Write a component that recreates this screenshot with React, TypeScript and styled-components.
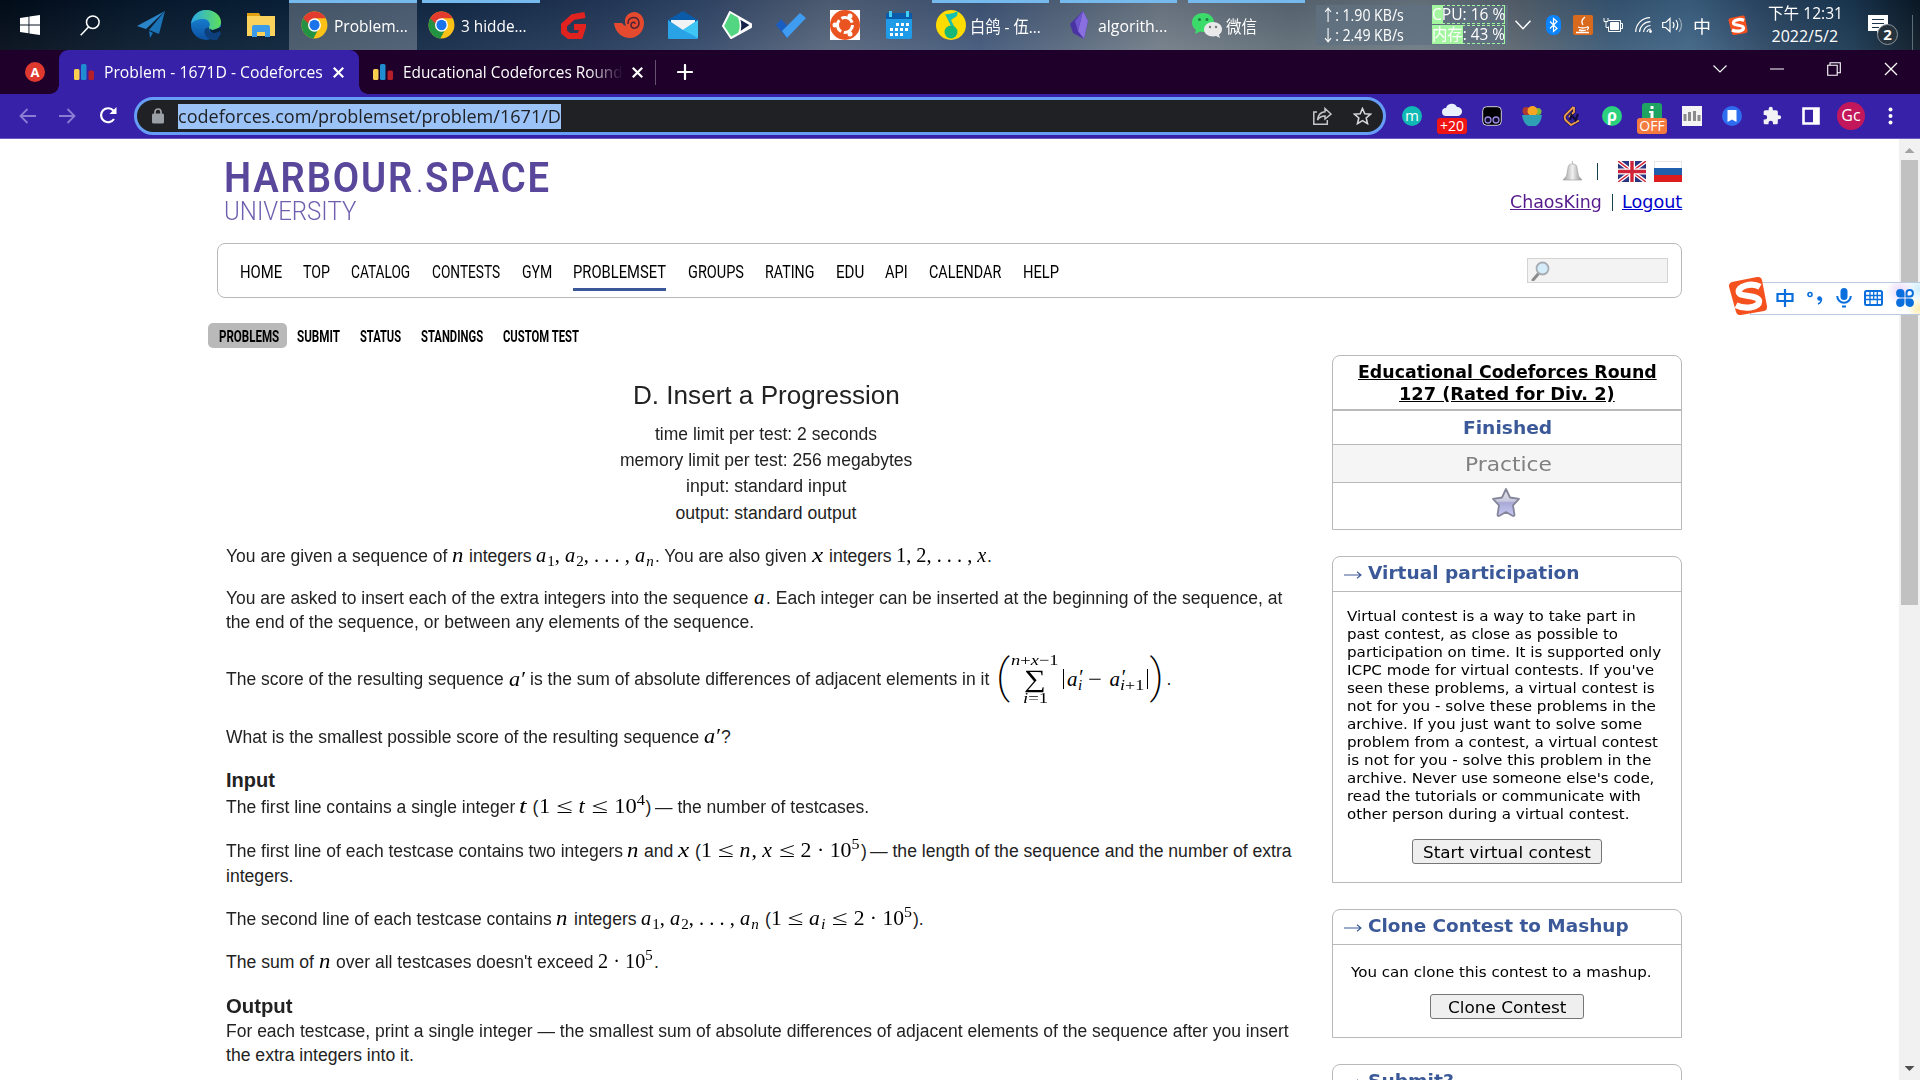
import React, { useLayoutEffect, useRef, useState } from "react";
import styled, { createGlobalStyle, css } from "styled-components";

const ui = `"Open Sans", "Noto Sans", "Noto Sans CJK SC", sans-serif`;
const verdana = `"DejaVu Sans", Verdana, sans-serif`;
const arial = `"Liberation Sans", Arial, sans-serif`;
const serif = `"Liberation Serif", "Times New Roman", serif`;
const blue = "#3b5998";
const line = "#b9b9b9";

const Global = createGlobalStyle`
  * { box-sizing: border-box; }
  html, body { margin: 0; padding: 0; overflow: hidden; background: #fff; }
  svg { display: block; flex: none; }
`;

/* ---------- text set to a given measure ---------- */
const FitBox = styled.span<{ $w: number; $ml?: number }>`
  display: inline-block;
  flex: none;
  width: ${(p) => p.$w}px;
  margin-left: ${(p) => p.$ml ?? 0}px;
  white-space: pre;
`;
const FitInner = styled.span<{ $u?: boolean }>`
  display: inline-block;
  transform-origin: 0 50%;
  text-decoration: ${(p) => (p.$u ? "underline" : "none")};
`;
type FitProps = { w: number; ml?: number; u?: boolean; className?: string; children: React.ReactNode };
function Fit({ w, ml, u, className, children }: FitProps) {
  const ref = useRef<HTMLSpanElement>(null);
  const [scale, setScale] = useState(1);
  useLayoutEffect(() => {
    if (ref.current) setScale(w / ref.current.offsetWidth);
  }, [w]);
  return (
    <FitBox $w={w} $ml={ml} className={className}>
      <FitInner ref={ref} $u={u} style={{ transform: `scaleX(${scale})` }}>
        {children}
      </FitInner>
    </FitBox>
  );
}

/* ---------- shell ---------- */
const Screen = styled.div`
  width: 1920px;
  height: 1080px;
  overflow: hidden;
  display: flex;
  flex-direction: column;
  position: relative;
  font-family: ${ui};
`;

/* ---------- task bar ---------- */
const TaskBar = styled.div`
  height: 50px;
  flex: none;
  display: flex;
  color: #fff;
  font-size: 17px;
  background: linear-gradient(180deg, rgba(0, 10, 30, 0.12), rgba(255, 255, 255, 0.05)),
    linear-gradient(90deg, #020b17 0, #07192c 130px, #0a2138 280px, #142b48 440px, #253a5a 600px, #34496a 700px, #56657b 830px, #42587a 980px, #596a7f 1070px, #727d88 1160px, #5f6c76 1290px, #6e7b84 1420px, #59646f 1520px, #3a5a77 1610px, #3f6485 1690px, #2b4662 1770px, #1b3953 1850px, #0b1824 1920px);
`;
const Launcher = styled.div<{ $w: number; $ml?: number }>`
  flex: none;
  width: ${(p) => p.$w}px;
  margin-left: ${(p) => p.$ml ?? 0}px;
  display: flex;
  align-items: center;
  justify-content: center;
`;
const Task = styled.div<{ $w: number; $ml?: number; $active?: boolean; $pad?: number }>`
  flex: none;
  width: ${(p) => p.$w}px;
  margin-left: ${(p) => p.$ml ?? 0}px;
  padding-left: ${(p) => p.$pad ?? 4}px;
  display: flex;
  align-items: center;
  border-top: 3px solid #76b9ed;
  padding-bottom: 3px;
  background: ${(p) => (p.$active ? "rgba(255,255,255,.24)" : "none")};
`;
const Meter = styled.div`
  flex: none;
  width: 192px;
  height: 40px;
  margin: 5px 0 0 11px;
  padding-left: 5px;
  display: grid;
  grid-template-columns: 111px 73px;
  grid-template-rows: 20px 20px;
  line-height: 20px;
  font-size: 16px;
  background: rgba(96, 114, 130, 0.75);
`;
const Gauge = styled.div<{ $fill: number }>`
  height: 19px;
  line-height: 19px;
  border: 1px dashed #a4f5a0;
  border-left: 0;
  background: linear-gradient(90deg, #a4f5a0 ${(p) => p.$fill}px, transparent ${(p) => p.$fill}px);
  display: flex;
  align-items: center;
`;
const Clock = styled.div`
  flex: none;
  width: 76px;
  margin-left: 20px;
  display: flex;
  flex-direction: column;
  align-items: center;
  font-size: 16px;
  line-height: 23px;
  padding-top: 2px;
`;
const Notice = styled.div`
  position: relative;
  margin: 15px 0 0 25px;
  width: 45px;
  border-right: 1px solid #5d6c79;
`;
const NoticeCount = styled.div`
  position: absolute;
  left: 9px;
  top: 9px;
  width: 21px;
  height: 21px;
  border-radius: 50%;
  border: 1px solid #8d969e;
  background: #26323c;
  font: bold 15px/18px ${ui};
  text-align: center;
`;

/* ---------- browser chrome ---------- */
const TabStrip = styled.div`
  height: 44px;
  flex: none;
  display: flex;
  align-items: center;
  background: #1e002a;
  color: #fff;
  font-size: 16px;
`;
const PinTab = styled.div`
  width: 20px;
  height: 20px;
  margin-left: 25px;
  border-radius: 50%;
  background: #df382f;
  font: bold 13px/20px ${ui};
  text-align: center;
`;
const ActiveTab = styled.div`
  width: 300px;
  height: 44px;
  margin-left: 14px;
  padding-left: 15px;
  display: flex;
  align-items: center;
  border-radius: 9px 9px 0 0;
  background: #3621a8;
  position: relative;
  &::before, &::after {
    content: "";
    position: absolute;
    bottom: 0;
    width: 9px;
    height: 9px;
  }
  &::before { left: -9px; background: radial-gradient(circle at 0 0, transparent 8.5px, #3621a8 9px); }
  &::after { right: -9px; background: radial-gradient(circle at 100% 0, transparent 8.5px, #3621a8 9px); }
`;
const IdleTab = styled.div`
  width: 297px;
  height: 25px;
  padding-left: 14px;
  display: flex;
  align-items: center;
  border-right: 1px solid #65526e;
`;
const FadeTitle = styled.div`
  width: 220px;
  margin-left: 10px;
  overflow: hidden;
  mask-image: linear-gradient(90deg, #000 185px, transparent 220px);
`;
const WindowButtons = styled.div`
  display: flex;
  align-items: center;
  gap: 43px;
  margin-left: auto;
  padding-right: 22px;
  padding-bottom: 6px;
`;
const Toolbar = styled.div`
  height: 45px;
  flex: none;
  display: flex;
  align-items: center;
  padding-bottom: 1px;
  background: #3621a8;
  border-bottom: 1px solid #6b5bc0;
`;
const Omnibox = styled.div`
  width: 1252px;
  height: 38px;
  margin: 1px 0 0 17px;
  padding: 0 12px 0 15px;
  display: flex;
  align-items: center;
  border: 3px solid #669df6;
  border-radius: 19px;
  background: #202124;
`;
const Url = styled.div`
  height: 25px;
  margin-left: 14px;
  background: #9cc3f7;
  color: #202124;
  font-size: 19px;
  line-height: 24px;
`;
const Ext = styled.div<{ $ml?: number; $w?: number }>`
  flex: none;
  width: ${(p) => p.$w ?? 20}px;
  height: 32px;
  margin-left: ${(p) => p.$ml ?? 20}px;
  display: flex;
  align-items: center;
  justify-content: center;
  position: relative;
`;
const Round = styled.div<{ $s: number; $bg: string; $f?: number }>`
  width: ${(p) => p.$s}px;
  height: ${(p) => p.$s}px;
  border-radius: 50%;
  background: ${(p) => p.$bg};
  color: #fff;
  font-size: ${(p) => p.$f ?? 15}px;
  line-height: ${(p) => p.$s - 2}px;
  text-align: center;
`;
const Badge = styled.div<{ $bg: string }>`
  position: absolute;
  left: -5px;
  top: 18px;
  width: 30px;
  height: 16px;
  border-radius: 3px;
  background: ${(p) => p.$bg};
  color: #fff;
  font-size: 14px;
  line-height: 15px;
  text-align: center;
`;

/* ---------- page ---------- */
const Viewport = styled.div`
  height: 941px;
  display: flex;
  justify-content: space-between;
  background: #fff;
`;
const Page = styled.div`
  width: 1465px;
  margin-left: 217px;
`;
const ScrollBar = styled.div`
  width: 21px;
  display: flex;
  flex-direction: column;
  align-items: center;
  background: #f1f1f1;
`;
const Thumb = styled.div`
  width: 17px;
  height: 445px;
  margin-top: 7px;
  background: #c1c1c1;
`;
const Arrow = styled.div<{ $down?: boolean }>`
  width: 10px;
  height: 5px;
  margin-top: ${(p) => (p.$down ? "auto" : "9px")};
  margin-bottom: ${(p) => (p.$down ? "9px" : "0")};
  background: ${(p) => (p.$down ? "#505050" : "#a3a3a3")};
  clip-path: ${(p) => (p.$down ? "polygon(0 0, 100% 0, 50% 100%)" : "polygon(50% 0, 100% 100%, 0 100%)")};
`;
const Header = styled.header`
  height: 104px;
  display: flex;
  justify-content: space-between;
`;
const Logo = styled.div`
  padding: 18px 0 0 7px;
  display: flex;
  flex-direction: column;
  font-family: Roboto, sans-serif;
`;
const LogoName = styled.div`
  height: 42px;
  font-size: 42px;
  line-height: 42px;
  font-weight: 600;
  letter-spacing: 2px;
  color: #59479b;
`;
const LogoDot = styled.span`
  display: inline-block;
  width: 12px;
  font-size: 22px;
  line-height: 22px;
  font-weight: 400;
  text-align: center;
  letter-spacing: 0;
`;
const LogoSub = styled.div`
  height: 24px;
  font-size: 25.5px;
  line-height: 24px;
  font-weight: 300;
  color: #6f5fae;
`;
const User = styled.div`
  display: flex;
  flex-direction: column;
  align-items: flex-end;
  font: 17.6px/24px ${verdana};
  padding-top: 21px;
  color: #0c3c5c;
`;
const UserIcons = styled.div`
  height: 23px;
  display: flex;
  align-items: center;
`;
const UserLinks = styled.div`
  display: flex;
  margin-top: 7px;
  align-items: baseline;
`;
const Link = styled.span<{ $c: string }>`
  color: ${(p) => p.$c};
`;
const Bar = styled.span<{ $l: number; $r: number }>`
  width: 1px;
  height: 17px;
  align-self: center;
  margin: 0 ${(p) => p.$r}px 0 ${(p) => p.$l}px;
  background: #14404e;
`;
const Menu = styled.nav`
  height: 55px;
  padding: 0 13px 0 22px;
  display: flex;
  align-items: center;
  justify-content: space-between;
  border: 1px solid ${line};
  border-radius: 8px;
  font: 18.4px/24px Roboto, sans-serif;
  color: #000;
`;
const MenuItems = styled.div`
  display: flex;
  gap: 21.2px;
  padding-top: 7px;
`;
const MenuItem = styled.span<{ $on?: boolean }>`
  height: 34px;
  border-bottom: 3px solid ${(p) => (p.$on ? blue : "transparent")};
  padding-top: 3px;
`;
const Search = styled.div`
  width: 141px;
  height: 25px;
  margin-bottom: 1px;
  padding: 2px 3px;
  border: 1px solid #d3d3d3;
  background: #f3f3f3;
`;
const SubMenu = styled.div`
  display: flex;
  margin: 25px 0 7px -9px;
  height: 25px;
  font: bold 16px/27px Roboto, sans-serif;
`;
const SubPill = styled.span`
  width: 79px;
  padding-left: 10.5px;
  border-radius: 5px;
  background: #b9b9b9;
`;
const Main = styled.main`
  display: flex;
  justify-content: space-between;
`;
const Statement = styled.article`
  width: 1080px;
  margin-left: 9px;
  font: 17.6px/24px ${arial};
  color: #222;
`;
const Title = styled.h1`
  margin: 23px 0 8.75px;
  font-size: 26.4px;
  line-height: 34px;
  font-weight: 400;
  text-align: center;
`;
const Limits = styled.div`
  display: flex;
  flex-direction: column;
  align-items: center;
  line-height: 26.3px;
  margin-bottom: 18px;
`;
const Line = styled.div<{ $mt?: number; $h?: number }>`
  display: flex;
  align-items: ${(p) => (p.$h ? "center" : "baseline")};
  height: ${(p) => p.$h ?? 24}px;
  margin-top: ${(p) => p.$mt ?? 0}px;
`;
const Section = styled.h2<{ $mt: number }>`
  margin: ${(p) => p.$mt}px 0 0;
  font-size: 20px;
  line-height: 26px;
  font-weight: 700;
`;
const math = css`
  font-family: ${serif};
  font-size: 21px;
  line-height: 1px;
  color: #000;
`;
const M = styled(Fit)`
  ${math}
  i { padding-right: 1px; }
`;
const Sub = styled.span`
  font-size: 15.5px;
  vertical-align: -4px;
`;
const Sup = styled.span`
  font-size: 15.5px;
  vertical-align: 8px;
`;
const Formula = styled.span`
  ${math}
  display: flex;
  align-items: center;
  height: 50px;
  margin-left: 7px;
`;
const Paren = styled(Fit)`
  font-family: Roboto, sans-serif;
  font-weight: 200;
  font-size: 46px;
  line-height: 50px;
  padding-bottom: 6px;
`;
const SumStack = styled.span`
  width: 50px;
  display: flex;
  flex-direction: column;
  align-items: center;
  font-size: 15px;
`;
const SumPart = styled.span<{ $h: number; $f?: number }>`
  height: ${(p) => p.$h}px;
  line-height: ${(p) => p.$h}px;
  font-size: ${(p) => p.$f ?? 15}px;
`;
const Abs = styled.span`
  width: 1px;
  height: 20px;
  background: #000;
`;
const SubSup = styled.span`
  display: inline-flex;
  flex-direction: column;
  font-size: 15px;
  line-height: 13px;
`;
const Prime = styled.span`
  height: 12px;
  font-size: 20px;
  line-height: 20px;
  font-style: italic;
`;

/* ---------- side bar ---------- */
const Side = styled.aside`
  width: 350px;
  display: flex;
  flex-direction: column;
  gap: 26px;
  font: 17.6px/22px ${verdana};
  color: #000;
`;
const Box = styled.section`
  border: 1px solid ${line};
  border-radius: 8px 8px 0 0;
`;
const RoundTitle = styled.div`
  padding: 5px 0 4px;
  display: flex;
  flex-direction: column;
  align-items: center;
  font-weight: 700;
  border-bottom: 2px solid ${line};
`;
const State = styled.div`
  height: 34px;
  line-height: 33px;
  padding: 1px 3px 0 0;
  text-align: center;
  font-weight: 700;
  color: ${blue};
  border-bottom: 1px solid ${line};
`;
const Practice = styled.div`
  height: 38px;
  line-height: 36px;
  padding: 1px 4px 0 0;
  text-align: center;
  font-size: 20px;
  color: #808080;
  background: #f5f5f5;
  border-bottom: 1px solid ${line};
`;
const StarCell = styled.div`
  height: 46px;
  padding: 4px 0 0 158px;
`;
const BoxHead = styled.div`
  height: 35px;
  padding-left: 11px;
  line-height: 32px;
  display: flex;
  font-weight: 700;
  color: ${blue};
  border-bottom: 1px solid ${line};
`;
const Tail = styled.div`
  width: 18px;
  margin-right: 6px;
  padding-top: 14px;
`;
const BoxBody = styled.div<{ $pt: number; $pl: number }>`
  padding: ${(p) => p.$pt}px 0 18px ${(p) => p.$pl}px;
  display: flex;
  flex-direction: column;
  font-size: 14.2px;
  line-height: 18px;
`;
const Button = styled.button<{ $w: number; $mt: number; $ml: number }>`
  width: ${(p) => p.$w}px;
  height: 25px;
  margin: ${(p) => p.$mt}px 0 0 ${(p) => p.$ml}px;
  padding: 0 2px 0 0;
  border: 1px solid #767676;
  border-radius: 3px;
  background: #efefef;
  color: #000;
  font: 16.6px/26px ${verdana};
`;

/* ---------- input-method bar floating over the window ---------- */
const Ime = styled.div`
  position: absolute;
  left: 1728px;
  top: 275px;
  width: 192px;
  height: 41px;
  display: flex;
  align-items: center;
`;
const ImeBar = styled.div`
  width: 170px;
  height: 33px;
  margin: 5px 0 0 -18px;
  padding: 0 6px 0 25px;
  display: flex;
  align-items: center;
  justify-content: space-between;
  border: 1px solid #b9cbe2;
  border-right: 0;
  background: radial-gradient(circle at 149px 8px, #e9d9fb 0, transparent 14px), radial-gradient(circle at 168px 26px, #fdeeb0 0, transparent 12px), radial-gradient(circle at 168px 6px, #cfeefc 0, transparent 14px), #fff;
`;
const ImeS = styled.div`
  position: relative;
`;

/* ---------- icons ---------- */
const Chrome = () => (
  <svg width="27" height="28" viewBox="0 0 48 48" preserveAspectRatio="none">
    <circle cx="24" cy="24" r="23" fill="#fbc116" />
    <path d="M24 24 4.1 12.5A23 23 0 0 0 22 47l10-18Z" fill="#229342" />
    <path d="M24 24 4.1 12.5A23 23 0 0 1 44 12.5H24Z" fill="#e33b2e" />
    <path d="M4.1 12.5 14 29.5 24 13Z" fill="#e33b2e" />
    <path d="M4.1 12.5 14 29.8 18 26Z" fill="#229342" />
    <circle cx="24" cy="24" r="11.5" fill="#fff" />
    <circle cx="24" cy="24" r="9" fill="#1a73e8" />
  </svg>
);
const CfIcon = () => (
  <svg width="20" height="16" viewBox="0 0 20 16">
    <rect x="0" y="5" width="5.5" height="11" rx="1.5" fill="#f8cf4e" />
    <rect x="7" y="0" width="5.5" height="16" rx="1.5" fill="#1f8dd0" />
    <rect x="14.5" y="6.5" width="5.5" height="9.5" rx="1.5" fill="#b41f2a" />
  </svg>
);
const Cross = ({ s = 11, w = 2 }: { s?: number; w?: number }) => (
  <svg width={s} height={s} viewBox="0 0 10 10"><path d="M.7.7l8.6 8.6M9.3.7.7 9.3" stroke="#fff" strokeWidth={w} /></svg>
);
const Sogou = ({ s, h = s }: { s: number; h?: number }) => (
  <svg width={s} height={h} viewBox="0 0 40 40" preserveAspectRatio="none">
    <path d="M5 6 29 1q4-.6 5 3l5 27q.4 4-3 5l-23 4q-4 .6-5-3L1 11q-.5-4 4-5Z" fill="#f4511e" />
    <path d="M32 11C23 6 9 11 11 17c2 5 20 2 20 9 0 7-15 8-23 4" fill="none" stroke="#fff" strokeWidth="6.4" />
  </svg>
);

const sideText: [string, number][] = [
  ["Virtual contest is a way to take part in", 289],
  ["past contest, as close as possible to", 271],
  ["participation on time. It is supported only", 314],
  ["ICPC mode for virtual contests. If you've", 307.5],
  ["seen these problems, a virtual contest is", 307.5],
  ["not for you - solve these problems in the", 309],
  ["archive. If you just want to solve some", 295],
  ["problem from a contest, a virtual contest", 310.5],
  ["is not for you - solve this problem in the", 304.5],
  ["archive. Never use someone else's code,", 307],
  ["read the tutorials or communicate with", 294],
  ["other person during a virtual contest.", 282.5],
];
const menu: [string, number][] = [
  ["HOME", 42], ["TOP", 27], ["CATALOG", 59.5], ["CONTESTS", 68.5], ["GYM", 30.5], ["PROBLEMSET", 93],
  ["GROUPS", 56], ["RATING", 49.5], ["EDU", 28], ["API", 23], ["CALENDAR", 72.5], ["HELP", 36],
];

const Tick = () => (
  <Tail><svg width="18" height="8" viewBox="0 0 18 8"><path d="M0 4h17M13 .8 17 4l-4 3.2" fill="none" stroke={blue} strokeWidth="1.1" /></svg></Tail>
);

function Tasks() {
  return (
    <TaskBar>
      <Launcher $w={20} $ml={20}>
        <svg width="20" height="20" viewBox="0 0 20 20" fill="#fff"><path d="M0 3l8.5-1.3v7.8H0zM9.4 1.5 20 0v9.5H9.4zM0 10.4h8.5v7.8L0 17zM9.4 10.4H20V20L9.4 18.4z" /></svg>
      </Launcher>
      <Launcher $w={20} $ml={40}>
        <svg width="20" height="21" viewBox="0 0 20 21" fill="none" stroke="#fff" strokeWidth="1.5"><circle cx="12.8" cy="7.2" r="6.3" /><path d="M8.5 12 .7 20.3" /></svg>
      </Launcher>
      <Launcher $w={28} $ml={37}>
        <svg width="28" height="28" viewBox="0 0 28 28"><path d="M28 0 0 15l9 3z" fill="#2a86c8" /><path d="M28 0 12 19l10 4z" fill="#1b73b8" /><path d="m12 20 4 2-3 5z" fill="#1b73b8" /></svg>
      </Launcher>
      <Launcher $w={30} $ml={26}>
        <svg width="30" height="30" viewBox="0 0 30 30">
          <defs>
            <linearGradient id="eg1" x1="0" x2="1"><stop stopColor="#2aa7e8" /><stop offset="1" stopColor="#5ee05a" /></linearGradient>
            <linearGradient id="eg2" x1="0" y1="0" x2="0" y2="1"><stop stopColor="#1b8fe0" /><stop offset="1" stopColor="#0c4fa0" /></linearGradient>
          </defs>
          <circle cx="15" cy="15" r="15" fill="url(#eg2)" />
          <path d="M0 14C1 5 8 0 15 0c9 0 15 6 15 12 0 5-4 8-8 8-3 0-5-1-4-3 2-3 0-8-6-8-5 0-10 2-12 5Z" fill="url(#eg1)" />
          <path d="M18 17c-1 3 1 6 5 6 2 0 4-1 6-2l1 3-4 6H22c-6-1-10-6-8-11Z" fill="#0c3f7c" />
          <path d="M18.500 18c0 3 2 5 5 5 2 0 4-1 6.500-2.500V17l-8 3q-2.500 0-3.500-2Z" fill="#08223a" />
        </svg>
      </Launcher>
      <Launcher $w={28} $ml={26}>
        <svg width="28" height="24" viewBox="0 0 28 24"><path d="M0 0h12l2 4H0z" fill="#e0a012" /><path d="M0 3h28v20H0z" fill="#fbd25c" /><path d="M5 24V14q0-2 2-2h14q2 0 2 2v10h-5v-5h-8v5z" fill="#3b9be8" /></svg>
      </Launcher>
      <Task $w={128} $ml={14} $pad={12} $active><Chrome /><Fit w={74} ml={6}>Problem...</Fit></Task>
      <Task $w={118} $ml={5} $pad={6}><Chrome /><Fit w={66} ml={6}>3 hidde...</Fit></Task>
      <Launcher $w={26} $ml={20}>
        <svg width="26" height="28" viewBox="0 0 26 28" fill="none" stroke="#e0231f" strokeWidth="6"><path d="M25 4 13 6 4 14v7l5 4h11l3-9h-9" /></svg>
      </Launcher>
      <Launcher $w={30} $ml={28}>
        <svg width="30" height="26" viewBox="0 0 30 26"><path d="M0 11h8q2 3 4 3C9 6 13 1 20 0c6 0 10 5 10 11 0 8-6 15-14 15C8 26 1 20 0 11Z" fill="#e64a2e" /><path d="M14 12c-1-8 11-9 11-1 0 6-8 7-8 2 0-3 4-4 4-1" fill="none" stroke="#4b2236" strokeWidth="1.500" /></svg>
      </Launcher>
      <Launcher $w={30} $ml={24}>
        <svg width="30" height="28" viewBox="0 0 30 28"><path d="M0 9 15 0l15 9v4H0z" fill="#0a5cab" /><path d="M3 9h24v10H3z" fill="#f1f3f5" /><path d="M0 9v18q0 1 1 1h28q1 0 1-1V9L15 19z" fill="#2aa3e6" /><path d="M15 19 30 9v18z" fill="#3fc6f5" /></svg>
      </Launcher>
      <Launcher $w={30} $ml={24}>
        <svg width="30" height="28" viewBox="0 0 30 28"><path d="M8 1 29 13v3L9 27 1 15z" fill="#52d681" stroke="#fff" strokeWidth="2" strokeLinejoin="round" /><path d="m17 7 12 7-12 8q3-7 0-15Z" fill="#15224a" stroke="#fff" strokeWidth="1.6" /></svg>
      </Launcher>
      <Launcher $w={30} $ml={24}>
        <svg width="30" height="25" viewBox="0 0 30 25"><path d="m0 12 5-6 11 12-5 7z" fill="#1a5dc0" /><path d="M11 25 6 18 24 0l6 5z" fill="#3f9cf0" /></svg>
      </Launcher>
      <Launcher $w={30} $ml={24}>
        <svg width="30" height="30" viewBox="0 0 30 30"><path d="M0 0h30v30H0z" fill="#fff" /><circle cx="15" cy="15" r="15" fill="#e95420" /><circle cx="15" cy="15" r="7.5" fill="none" stroke="#fff" strokeWidth="3" strokeDasharray="13 2.7" /><circle cx="5" cy="15" r="2.5" fill="#fff" /><circle cx="20" cy="6" r="2.5" fill="#fff" /><circle cx="20" cy="24" r="2.5" fill="#fff" /></svg>
      </Launcher>
      <Launcher $w={26} $ml={26}>
        <svg width="26" height="28" viewBox="0 0 26 28"><path d="M0 3h26v23q0 2-2 2H2q-2 0-2-2z" fill="#1f9be8" /><path d="M0 2h26v6H0z" fill="#0a5cab" /><path d="M3 0h3v6H3zM20 0h3v6h-3z" fill="#3fd0f5" /><path d="M10 12h3v3h-3zm5 0h3v3h-3zm5 0h3v3h-3zM4 17h3v3H4zm5 0h3v3H9zm5 0h3v3h-3zm5 0h3v3h-3zM4 22h3v3H4zm5 0h3v3H9zm5 0h3v3h-3z" fill="#fff" /></svg>
      </Launcher>
      <Task $w={117} $ml={20}>
        <svg width="30" height="30" viewBox="0 0 30 30"><circle cx="15" cy="15" r="15" fill="#ffdc00" /><path d="M9 4q6 1 13-3l-1 5-6 4 6 12-4-2-7-14Z" fill="#17bfae" /><circle cx="15" cy="22" r="6.5" fill="#17b877" /></svg>
        <Fit w={71} ml={4}>白鸽 - 伍...</Fit>
      </Task>
      <Task $w={117} $ml={11} $pad={10}>
        <svg width="18" height="28" viewBox="0 0 18 28"><path d="m13 0 5 10-4 18-11-6-3-9z" fill="#4a34a4" /><path d="m13 0 5 10-4 18-6-8z" fill="#8a6fe0" /><path d="M13 0 5 10l3 10z" fill="#6c55cc" /></svg>
        <Fit w={69} ml={10}>algorith...</Fit>
      </Task>
      <Task $w={117} $ml={11}>
        <svg width="30" height="25" viewBox="0 0 30 25"><path d="M11 0c6 0 11 4 11 9s-5 10-11 10l-3-.5L3 21l1-4C1 15 0 12 0 9.500 0 4 5 0 11 0Z" fill="#3cdc6a" /><circle cx="7.500" cy="6.500" r="1.500" fill="#1d7c3e" /><circle cx="15" cy="6.500" r="1.500" fill="#1d7c3e" /><path d="M21 9c5 0 9 3 9 7 0 3-1 4-3 5.500l1 3.500-4-2-3 .5c-5 0-9-3-9-7s4-7.500 9-7.500Z" fill="#e9e9e9" /><circle cx="18" cy="14" r="1.200" fill="#777" /><circle cx="24" cy="14" r="1.200" fill="#777" /></svg>
        <Fit w={31} ml={4}>微信</Fit>
      </Task>
      <Meter>
        <Fit w={83}>↑: 1.90 KB/s</Fit>
        <Gauge $fill={11}><Fit w={73}>CPU: 16 %</Fit></Gauge>
        <Fit w={83}>↓: 2.49 KB/s</Fit>
        <Gauge $fill={31}><Fit w={73}>内存: 43 %</Fit></Gauge>
      </Meter>
      <Launcher $w={16} $ml={7}><svg width="16" height="10" viewBox="0 0 16 10"><path d="m.5.700 7.500 8 7.500-8" fill="none" stroke="#fff" strokeWidth="1.400" /></svg></Launcher>
      <Launcher $w={16} $ml={14}><svg width="15" height="20" viewBox="0 0 15 20"><rect width="15" height="20" rx="7" fill="#0a84ff" /><path d="m4 6.500 7 7-3.500 3V3.500l3.500 3-7 7" fill="none" stroke="#fff" strokeWidth="1.200" /></svg></Launcher>
      <Launcher $w={20} $ml={12}><svg width="20" height="20" viewBox="0 0 20 20"><rect width="20" height="20" rx="2" fill="#d9691c" /><path d="M12 2q-5 4-2 8M5 12q5 2 9 0m-8 3q4 1 7 0M3 17.500h13M14 12q3 0 0 3" fill="none" stroke="#fff" strokeWidth="1.300" /></svg></Launcher>
      <Launcher $w={20} $ml={10}><svg width="20" height="16" viewBox="0 0 20 16" fill="none" stroke="#fff"><path d="M5.500 3.500h12v11h-12v-5M17.500 6.500H19.500v5h-2M1 1v3.500h4V1M3 4.500v6h2.500" /><path d="M7.500 5.500h8v7h-8z" fill="#fff" /></svg></Launcher>
      <Launcher $w={18} $ml={12}><svg width="18" height="16" viewBox="0 0 18 16" fill="none" stroke="#fff" strokeWidth="1.200"><path d="M.7 15A14.500 14.500 0 0 1 15 .7M4.500 15A11 11 0 0 1 15.500 4.700M8.500 15a7 7 0 0 1 7-6.500M12 15q.5-3 4-3" /><circle cx="15.500" cy="14.500" r=".8" fill="#fff" /></svg></Launcher>
      <Launcher $w={21} $ml={9}><svg width="21" height="16" viewBox="0 0 21 16" fill="none" stroke="#fff" strokeWidth="1.200"><path d="M.7 5.500h3L8 1.500v13l-4.300-4h-3zM11 5q2 3 0 6M14 3q3.500 5 0 10" /><path d="M17 1q5 7 0 14" stroke="#9fb0bd" /></svg></Launcher>
      <Launcher $w={18} $ml={10}><Fit w={18}>中</Fit></Launcher>
      <Launcher $w={19} $ml={17}><Sogou s={20} /></Launcher>
      <Clock><Fit w={75}>下午 12:31</Fit><Fit w={67}>2022/5/2</Fit></Clock>
      <Notice>
        <svg width="20" height="20" viewBox="0 0 20 20"><path d="M0 0h20v16h-7l-4 4v-4H0z" fill="#fff" /><path d="M4 4.500h12M4 8.500h12M4 12.500h7" stroke="#1c3348" strokeWidth="1.200" /></svg>
        <NoticeCount>2</NoticeCount>
      </Notice>
    </TaskBar>
  );
}

function Browser() {
  const stroke = { fill: "none", stroke: "#fff", strokeWidth: 1.1 };
  return (
    <>
      <TabStrip>
        <PinTab>A</PinTab>
        <ActiveTab><CfIcon /><Fit w={219} ml={10}>Problem - 1671D - Codeforces</Fit><Launcher $w={11} $ml={10}><Cross /></Launcher></ActiveTab>
        <IdleTab>
          <CfIcon />
          <FadeTitle><Fit w={220}>Educational Codeforces Round</Fit></FadeTitle>
          <Launcher $w={11} $ml={9}><Cross /></Launcher>
        </IdleTab>
        <Launcher $w={16} $ml={21}><svg width="16" height="16" viewBox="0 0 16 16"><path d="M8 1v14M1 8h14" stroke="#fff" strokeWidth="2.200" strokeLinecap="round" /></svg></Launcher>
        <WindowButtons>
          <svg width="14" height="8" viewBox="0 0 14 8" {...stroke}><path d="m.5.5 6.500 6.500L13.500.5" /></svg>
          <svg width="14" height="2" viewBox="0 0 14 2"><path d="M0 1h14" stroke="#fff" /></svg>
          <svg width="14" height="14" viewBox="0 0 14 14" {...stroke}><path d="M.7 3.300h9.500v10H.7zM3 3V.7h10.300v10H10.500" /></svg>
          <Cross s={14} w={0.9} />
        </WindowButtons>
      </TabStrip>
      <Toolbar>
        <Launcher $w={17} $ml={19}><svg width="17" height="16" viewBox="0 0 17 16" fill="none" stroke="#8c7dd4" strokeWidth="1.800"><path d="M17 8H1.500M8.500 1l-7 7 7 7" /></svg></Launcher>
        <Launcher $w={17} $ml={23}><svg width="17" height="16" viewBox="0 0 17 16" fill="none" stroke="#8c7dd4" strokeWidth="1.800"><path d="M0 8h15.500M8.500 1l7 7-7 7" /></svg></Launcher>
        <Launcher $w={18} $ml={23}><svg width="18" height="17" viewBox="0 0 18 17"><path d="M15 12a7 7 0 1 1-.5-8.200" fill="none" stroke="#fff" strokeWidth="2.200" /><path d="M17.500 0v7h-7z" fill="#fff" /></svg></Launcher>
        <Omnibox>
          <svg width="12" height="16" viewBox="0 0 12 16"><path d="M3 6V4a3 3 0 0 1 6 0v2" fill="none" stroke="#9aa0a6" strokeWidth="1.700" /><rect y="5.500" width="12" height="10" rx="1.500" fill="#9aa0a6" /></svg>
          <Url><Fit w={383}>codeforces.com/problemset/problem/1671/D</Fit></Url>
          <Launcher $w={20} $ml={751}><svg width="19" height="18" viewBox="0 0 19 18" fill="none" stroke="#c4c7c9" strokeWidth="1.500"><path d="M4 5H.8v12.200h13.500V13" /><path d="M12 1.500 18 7l-6 5V9C8 9 6 10.500 4.500 13 5 8 8 5.200 12 4.800z" /></svg></Launcher>
          <Launcher $w={20} $ml={20}><svg width="19" height="18" viewBox="0 0 19 18"><path d="m9.500 1.500 2.300 5.200 5.700.5-4.300 3.800 1.300 5.600-5-3-5 3L5.800 11 1.500 7.200l5.700-.5z" fill="none" stroke="#d4d6d8" strokeWidth="1.600" /></svg></Launcher>
        </Omnibox>
        <Ext $ml={16}><Round $s={20} $bg="#10b9b4">m</Round></Ext>
        <Ext><svg width="20" height="30" viewBox="0 0 20 30"><path d="M4 15a4 4 0 0 1 0-8 6 6 0 0 1 11-1 4.500 4.500 0 0 1 1 9z" fill="#e9f2fc" /></svg><Badge $bg="#f01414">+20</Badge></Ext>
        <Ext><svg width="20" height="20" viewBox="0 0 20 20"><rect x=".7" y=".7" width="18.600" height="18.600" rx="4" fill="#000" stroke="#cfd0d6" /><circle cx="6" cy="14" r="3" fill="#0d0d30" stroke="#9a8be0" strokeWidth="1.300" /><circle cx="14" cy="14" r="3" fill="#0d0d30" stroke="#9a8be0" strokeWidth="1.300" /></svg></Ext>
        <Ext><svg width="20" height="20" viewBox="0 0 20 20"><circle cx="4.500" cy="5" r="4" fill="#b03a30" /><circle cx="16" cy="5.500" r="3.500" fill="#79b83c" /><circle cx="10.500" cy="5" r="5" fill="#f6a623" /><path d="M0 9h20q-1 8-6 11H6Q1 17 0 9Z" fill="#2f9fb5" /></svg></Ext>
        <Ext><svg width="18" height="20" viewBox="0 0 18 20" fill="none"><path d="M10.500 1 2.500 9q-2 3 1 6l4.500 4 8-4.500M11 1v5L6 11" stroke="#2a1850" strokeWidth="3.400" /><path d="M10.500 1 2.500 9q-2 3 1 6l4.500 4 8-4.500M11 1v5L6 11" stroke="#f0a04b" strokeWidth="1.800" /><path d="m7 14 1.500-5 4 5L15 8" stroke="#120c38" strokeWidth="2.200" /></svg></Ext>
        <Ext><Round $s={20} $bg="#2bd17e" $f={16}><b>ρ</b></Round></Ext>
        <Ext><svg width="20" height="30" viewBox="0 0 20 30"><rect width="20" height="20" y="2" rx="3" fill="#1ea362" /><path d="M8.500 5h3v3h-3zM7 10h4.500v7h-3v-5H7z" fill="#fff" /></svg><Badge $bg="#f57a3d">OFF</Badge></Ext>
        <Ext><svg width="20" height="20" viewBox="0 0 20 20"><path d="M0 0h20v20H0z" fill="#f4f4f4" /><path d="M3 8v7M7.500 6v9M12.500 5v10M17 9v6" stroke="#8b8b8b" strokeWidth="3" /></svg></Ext>
        <Ext><svg width="20" height="20" viewBox="0 0 20 20"><circle cx="10" cy="10" r="10" fill="#2f6df0" /><path d="M5.500 4h9v12L10 13.500 5.500 16z" fill="#fff" /></svg></Ext>
        <Ext><svg width="20" height="20" viewBox="0 0 24 24" fill="#f1f3f4"><path d="M20.500 11H19V7c0-1.100-.9-2-2-2h-4V3.500a2.500 2.500 0 0 0-5 0V5H4c-1.100 0-2 .9-2 2v3.800h1.500a2.700 2.700 0 0 1 0 5.400H2V20c0 1.100.9 2 2 2h3.800v-1.500a2.700 2.700 0 0 1 5.400 0V22H17c1.100 0 2-.9 2-2v-4h1.500a2.500 2.500 0 0 0 0-5z" /></svg></Ext>
        <Ext $ml={19}><svg width="18" height="18" viewBox="0 0 18 18"><path d="M1.500 1.500h15v15h-15z" fill="none" stroke="#fff" strokeWidth="2.600" /><path d="M11 1h6v16h-6z" fill="#fff" /></svg></Ext>
        <Ext $w={28} $ml={16}><Round $s={28} $bg="#c2185b" $f={16}>Gc</Round></Ext>
        <Ext $w={6} $ml={22}><svg width="5" height="18" viewBox="0 0 5 18" fill="#fff"><circle cx="2.500" cy="2.500" r="2" /><circle cx="2.500" cy="9" r="2" /><circle cx="2.500" cy="15.500" r="2" /></svg></Ext>
      </Toolbar>
    </>
  );
}

const Seq = () => (<><i>a</i><Sub>1</Sub>, <i>a</i><Sub>2</Sub>, . . . , <i>a</i><Sub><i>n</i></Sub></>);
const Le = () => <Fit w={16}>≤</Fit>;

function Problem() {
  return (
    <Statement>
      <Title><Fit w={267}>D. Insert a Progression</Fit></Title>
      <Limits>
        <Fit w={222}>time limit per test: 2 seconds</Fit>
        <Fit w={292}>memory limit per test: 256 megabytes</Fit>
        <Fit w={160}>input: standard input</Fit>
        <Fit w={181}>output: standard output</Fit>
      </Limits>
      <Line>
        <Fit w={221}>You are given a sequence of</Fit><M w={13} ml={5}><i>n</i></M><Fit w={63} ml={4}>integers</Fit>
        <M w={119} ml={4}><Seq /></M><Fit w={152}>. You are also given</Fit><M w={12} ml={5}><i>x</i></M>
        <Fit w={63} ml={5}>integers</Fit><M w={91} ml={4}>1, 2, . . . , <i>x</i></M><Fit w={5}>.</Fit>
      </Line>
      <Line $mt={18}><Fit w={523}>You are asked to insert each of the extra integers into the sequence</Fit><M w={12} ml={5}><i>a</i></M><Fit w={516}>. Each integer can be inserted at the beginning of the sequence, at</Fit></Line>
      <Line><Fit w={528}>the end of the sequence, or between any elements of the sequence.</Fit></Line>
      <Line $mt={20.5} $h={50}>
        <Fit w={278}>The score of the resulting sequence</Fit><M w={17} ml={5}><i>a</i>′</M>
        <Fit w={459} ml={4}>is the sum of absolute differences of adjacent elements in it</Fit>
        <Formula>
          <Paren w={14}>(</Paren>
          <SumStack>
            <SumPart $h={14}><Fit w={48}><i>n</i>+<i>x</i>−1</Fit></SumPart>
            <SumPart $h={24} $f={25}><Fit w={22}>∑</Fit></SumPart>
            <SumPart $h={14}><Fit w={25}><i>i</i>=1</Fit></SumPart>
          </SumStack>
          <FitBox $w={3} /><Abs /><FitBox $w={3} />
          <Fit w={11}><i>a</i></Fit><SubSup><Prime>′</Prime><i>i</i></SubSup>
          <Fit w={14} ml={6}>−</Fit>
          <Fit w={11} ml={7}><i>a</i></Fit><SubSup><Prime>′</Prime><Fit w={24}><i>i</i>+1</Fit></SubSup>
          <FitBox $w={3} /><Abs />
          <Paren w={14} ml={1}>)</Paren>
        </Formula>
        <Fit w={5} ml={3}>.</Fit>
      </Line>
      <Line $mt={20.5}><Fit w={473}>What is the smallest possible score of the resulting sequence</Fit><M w={17} ml={5}><i>a</i>′</M><Fit w={10}>?</Fit></Line>
      <Section $mt={17.8}><Fit w={49}>Input</Fit></Section>
      <Line $mt={1.9}>
        <Fit w={289}>The first line contains a single integer</Fit><M w={9} ml={4}><i>t</i></M><Fit w={6} ml={4.5}>(</Fit>
        <M w={106}>1 <Le /> <i>t</i> <Le /> 10<Sup>4</Sup></M><Fit w={6} ml={1}>)</Fit><Fit w={214} ml={3.5}>— the number of testcases.</Fit>
      </Line>
      <Line $mt={20.3}>
        <Fit w={397}>The first line of each testcase contains two integers</Fit><M w={13} ml={4}><i>n</i></M><Fit w={29} ml={4}>and</Fit>
        <M w={12} ml={5}><i>x</i></M><Fit w={6} ml={5}>(</Fit><M w={159} ml={0}>1 <Le /> <i>n</i>, <i>x</i> <Le /> 2 · 10<Sup>5</Sup></M><Fit w={6} ml={1}>)</Fit>
        <Fit w={422} ml={3}>— the length of the sequence and the number of extra</Fit>
      </Line>
      <Line $mt={1}><Fit w={67}>integers.</Fit></Line>
      <Line $mt={19}>
        <Fit w={326}>The second line of each testcase contains</Fit><M w={13} ml={4}><i>n</i></M><Fit w={63} ml={5}>integers</Fit>
        <M w={119} ml={4}><Seq /></M><Fit w={6} ml={5}>(</Fit><M w={141}>1 <Le /> <i>a</i><Sub><i>i</i></Sub> <Le /> 2 · 10<Sup>5</Sup></M><Fit w={11} ml={1}>).</Fit>
      </Line>
      <Line $mt={19}><Fit w={88}>The sum of</Fit><M w={13} ml={5}><i>n</i></M><Fit w={258} ml={4}>over all testcases doesn't exceed</Fit><M w={55} ml={4}>2 · 10<Sup>5</Sup></M><Fit w={5} ml={1}>.</Fit></Line>
      <Section $mt={18.8}><Fit w={67}>Output</Fit></Section>
      <Line><Fit w={1063}>For each testcase, print a single integer — the smallest sum of absolute differences of adjacent elements of the sequence after you insert</Fit></Line>
      <Line><Fit w={188}>the extra integers into it.</Fit></Line>
    </Statement>
  );
}

function Sidebar() {
  return (
    <Side>
      <Box>
        <RoundTitle><Fit w={299} u>Educational Codeforces Round</Fit><Fit w={216} u>127 (Rated for Div. 2)</Fit></RoundTitle>
        <State><Fit w={89}>Finished</Fit></State>
        <Practice><Fit w={87}>Practice</Fit></Practice>
        <StarCell>
          <svg width="30" height="31" viewBox="0 0 30 31">
            <defs><linearGradient id="st" x1="0" y1="0" x2="0" y2="1"><stop stopColor="#e6e6ea" /><stop offset=".45" stopColor="#c9c9de" /><stop offset=".5" stopColor="#a9a9d6" /><stop offset="1" stopColor="#c9c9f4" /></linearGradient></defs>
            <path d="m15 2 4 8.500 9 1.300-6 6.500 1.500 9.700q-.5 1.500-2 .8L15 25l-6.500 3.800q-1.500.7-2-.8l1.500-9.700L2 11.800l9-1.300z" fill="url(#st)" stroke="#85859a" strokeWidth="1.800" strokeLinejoin="round" />
          </svg>
        </StarCell>
      </Box>
      <Box>
        <BoxHead><Tick /><Fit w={212}>Virtual participation</Fit></BoxHead>
        <BoxBody $pt={15} $pl={13.500}>
          {sideText.map(([t, w]) => <Fit key={t} w={w}>{t}</Fit>)}
          <Button $w={190} $mt={16} $ml={65.500}><Fit w={168}>Start virtual contest</Fit></Button>
        </BoxBody>
      </Box>
      <Box>
        <BoxHead><Tick /><Fit w={261}>Clone Contest to Mashup</Fit></BoxHead>
        <BoxBody $pt={18} $pl={18}>
          <Fit w={301}>You can clone this contest to a mashup.</Fit>
          <Button $w={154} $mt={13} $ml={79}><Fit w={118}>Clone Contest</Fit></Button>
        </BoxBody>
      </Box>
      <Box><BoxHead><Tick /><Fit w={86}>Submit?</Fit></BoxHead></Box>
    </Side>
  );
}

function InputMethod() {
  const c = "#0a6fdc";
  return (
    <Ime>
      <ImeS><Sogou s={40} h={39} /></ImeS>
      <ImeBar>
        <svg width="18" height="18" viewBox="0 0 18 18" fill="none" stroke={c} strokeWidth="2.200"><path d="M1.500 5h15v7h-15zM9 0v18" /></svg>
        <svg width="16" height="14" viewBox="0 0 16 14"><circle cx="3" cy="3.500" r="2" fill="none" stroke={c} strokeWidth="1.600" /><circle cx="12.500" cy="7.500" r="2.300" fill={c} /><path d="M14.500 7.500q0 4-3.500 5.500" fill="none" stroke={c} strokeWidth="1.500" /></svg>
        <svg width="16" height="20" viewBox="0 0 16 20"><rect x="4.500" width="7" height="12" rx="3.500" fill={c} /><path d="M1.200 8a6.800 6.800 0 0 0 13.600 0M6 18.500h4" fill="none" stroke={c} strokeWidth="2" /></svg>
        <svg width="19" height="16" viewBox="0 0 19 16" fill="none" stroke={c}><rect x="1" y="1" width="17" height="14" rx="1.500" strokeWidth="2" /><path d="M2 5.500h15M2 9.500h15M6 2v12M9.700 2v8M13.300 2v12" strokeWidth="1.300" /></svg>
        <svg width="18" height="18" viewBox="0 0 18 18" fill={c}><path d="M8.500 8.500H4.200A4.200 4.200 0 1 1 8.500 4.200zM8.500 9.500v4.300A4.200 4.200 0 1 1 4.200 9.500zM9.500 9.500h4.300a4.200 4.200 0 1 1-4.300 4.300z" /><path d="M10.500 7.500V4.300a3.200 3.200 0 1 1 3.300 3.200z" fill="#fff" stroke={c} strokeWidth="2" /></svg>
      </ImeBar>
    </Ime>
  );
}

export default function App() {
  return (
    <Screen>
      <Global />
      <Tasks />
      <Browser />
      <Viewport>
        <Page>
          <Header>
            <Logo>
              <LogoName><Fit w={327}>HARBOUR<LogoDot>.</LogoDot>SPACE</Fit></LogoName>
              <LogoSub><Fit w={132}>UNIVERSITY</Fit></LogoSub>
            </Logo>
            <User>
              <UserIcons>
                <svg width="19" height="21" viewBox="0 0 19 21"><defs><linearGradient id="bl"><stop stopColor="#9a9a9a" /><stop offset=".5" stopColor="#f0f0f0" /><stop offset="1" stopColor="#8e8e8e" /></linearGradient></defs><path d="M9.500 0v3M5 7q0-4 4.500-4T14 7l1.500 8 3.500 4H0l3.500-4z" fill="url(#bl)" stroke="#a5a5a5" strokeWidth=".7" /></svg>
                <Bar $l={15} $r={20} />
                <svg width="28" height="21" viewBox="0 0 28 21"><path d="M0 0h28v21H0z" fill="#2b3480" /><path d="m0 0 28 21M28 0 0 21" stroke="#fff" strokeWidth="4" /><path d="m0 0 28 21M28 0 0 21" stroke="#cf2338" strokeWidth="1.400" /><path d="M14 0v21M0 10.500h28" stroke="#fff" strokeWidth="6" /><path d="M14 0v21M0 10.500h28" stroke="#cf2338" strokeWidth="3.400" /></svg>
                <FitBox $w={8} />
                <svg width="28" height="21" viewBox="0 0 28 21"><path d="M.3.3h27.400v20.400H.3z" fill="#fff" stroke="#ccc" strokeWidth=".6" /><path d="M0 7h28v7H0z" fill="#1f5fae" /><path d="M0 14h28v7H0z" fill="#dd1c1f" /></svg>
              </UserIcons>
              <UserLinks>
                <Link $c="#551a8b"><Fit w={92} u>ChaosKing</Fit></Link><Bar $l={10} $r={9} /><Link $c="#0000cc"><Fit w={60} u>Logout</Fit></Link>
              </UserLinks>
            </User>
          </Header>
          <Menu>
            <MenuItems>{menu.map(([t, w]) => <MenuItem key={t} $on={t === "PROBLEMSET"}><Fit w={w}>{t}</Fit></MenuItem>)}</MenuItems>
            <Search>
              <svg width="19" height="20" viewBox="0 0 19 20"><path d="M8 12 2 19" stroke="#8c8c8c" strokeWidth="3" strokeLinecap="round" /><circle cx="11.500" cy="7.500" r="6" fill="#d5ecfa" stroke="#a8adb3" strokeWidth="1.800" /></svg>
            </Search>
          </Menu>
          <SubMenu>
            <SubPill><Fit w={60}>PROBLEMS</Fit></SubPill>
            <Fit w={43} ml={10}>SUBMIT</Fit><Fit w={41} ml={19.500}>STATUS</Fit><Fit w={62} ml={20}>STANDINGS</Fit><Fit w={76} ml={20}>CUSTOM TEST</Fit>
          </SubMenu>
          <Main><Problem /><Sidebar /></Main>
        </Page>
        <ScrollBar><Arrow /><Thumb /><Arrow $down /></ScrollBar>
      </Viewport>
      <InputMethod />
    </Screen>
  );
}
